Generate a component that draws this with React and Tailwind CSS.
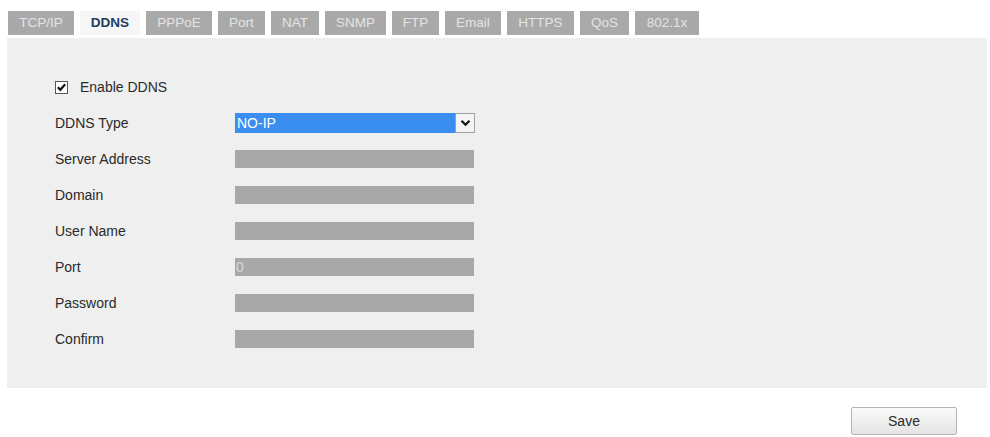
import React from "react";

const tabs = [
  { label: "TCP/IP", w: "w-[66px]" },
  { label: "DDNS", w: "w-[60px]", active: true },
  { label: "PPPoE", w: "w-[66px]" },
  { label: "Port", w: "w-[47px]" },
  { label: "NAT", w: "w-[48px]" },
  { label: "SNMP", w: "w-[61px]" },
  { label: "FTP", w: "w-[47px]" },
  { label: "Email", w: "w-[56px]" },
  { label: "HTTPS", w: "w-[67px]" },
  { label: "QoS", w: "w-[49px]" },
  { label: "802.1x", w: "w-[64px]" },
];

const fields = ["Server Address", "Domain", "User Name", "Port", "Password", "Confirm"];

function Row({ label, children }) {
  return (
    <div className="flex h-[36px] items-center">
      <div className="w-[180px] text-[14px] text-[#2a2a2a]">{label}</div>
      {children}
    </div>
  );
}

export default function App() {
  return (
    <div
      className="w-[990px] h-[437px] bg-white overflow-hidden"
      style={{ fontFamily: '"Liberation Sans", Arial, sans-serif' }}
    >
      {/* tab strip */}
      <div className="flex gap-[6px] pl-[8px] pt-[11px]">
        {tabs.map((t) => (
          <div
            key={t.label}
            className={`${t.w} h-[24px] flex items-center justify-center text-[13.5px] ${
              t.active
                ? "bg-[#f6f6f6] text-[#1f3d5c] font-bold"
                : "bg-[#a9a9a9] text-[#e4e4e4]"
            }`}
          >
            {t.label}
          </div>
        ))}
      </div>

      {/* settings panel */}
      <div className="ml-[7px] mt-[3px] w-[980px] h-[350px] bg-[#efefef] pl-[48px] pt-[31px]">
        <div className="flex h-[36px] items-center">
          <div className="w-[13px] h-[13px] border border-[#555] bg-white flex items-center justify-center">
            <svg width="11" height="11" viewBox="0 0 11 11">
              <path d="M1.8 5.2 L4.3 7.8 L9.2 2.2" fill="none" stroke="#111" strokeWidth="2.2" />
            </svg>
          </div>
          <span className="ml-[12px] text-[14px] text-[#2a2a2a]">Enable DDNS</span>
        </div>

        <Row label="DDNS Type">
          <div className="w-[240px] h-[20px] bg-[#3a8ef0] flex items-center justify-between">
            <span className="pl-[2px] text-[14px] text-white">NO-IP</span>
            <div className="w-[20px] h-[20px] bg-[#f4f4f4] border border-[#a0a0a0] flex items-center justify-center">
              <svg width="11" height="8" viewBox="0 0 11 8">
                <path d="M1.5 1.8 L5.5 5.8 L9.5 1.8" fill="none" stroke="#111" strokeWidth="2.2" />
              </svg>
            </div>
          </div>
        </Row>

        {fields.map((f) => (
          <Row key={f} label={f}>
            <div className="w-[239px] h-[18px] bg-[#a8a8a8] flex items-center">
              {f === "Port" && (
                <span className="pl-[1px] text-[14px] text-[#d8d8d8]">0</span>
              )}
            </div>
          </Row>
        ))}
      </div>

      {/* footer */}
      <div className="flex justify-end pr-[33px] mt-[19px]">
        <button className="w-[106px] h-[28px] border border-[#b5b5b5] rounded-[2px] bg-gradient-to-b from-[#fafafa] to-[#e4e4e4] text-[14px] text-[#2a2a2a]">
          Save
        </button>
      </div>
    </div>
  );
}
